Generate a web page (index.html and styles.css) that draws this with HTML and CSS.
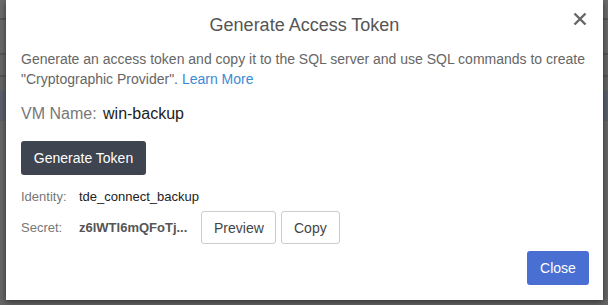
FILE: index.html
```html
<html>
    <head>
        <title>Generate Access Token</title>
        <meta charset="utf-8">
        <link rel="stylesheet" href="styles.css">
    </head>
    <body>
        <div class="modal">
            <div class="modal-header">
                <h4>Generate Access Token</h4>
                <svg class="close-x" width="14" height="14" viewBox="0 0 14 14">
                    <path d="M1.5 1.5 L12.5 12.5 M12.5 1.5 L1.5 12.5" stroke="#666" stroke-width="2.4" fill="none"/>
                </svg>
            </div>
            <div class="modal-body">
                <p class="intro">Generate an access token and copy it to the SQL server and use SQL commands to create "Cryptographic Provider". <a href="#">Learn More</a></p>
                <p class="vm-row"><span class="vm-label">VM Name:</span> <span class="vm-value">win-backup</span></p>
                <input type="button" class="btn dark" value="Generate Token">
                <div class="kv-row first">
                    <span class="kv-label">Identity:</span>
                    <span class="kv-value">tde_connect_backup</span>
                </div>
                <div class="kv-row">
                    <span class="kv-label">Secret:</span>
                    <span class="kv-value secret">z6lWTl6mQFoTj...</span>
                    <input type="button" class="btn light preview" value="Preview">
                    <input type="button" class="btn light" value="Copy">
                </div>
            </div>
            <div class="modal-footer">
                <input type="button" class="btn blue" value="Close">
            </div>
        </div>
    </body>
</html>
```

FILE: styles.css
```css
body {
    margin: 0;
    height: 305px;
    overflow: hidden;
    font-family: 'Liberation Sans', Arial, sans-serif;
    background: linear-gradient(#6b6b6b 0, #6b6b6b 18px, #555 18px, #555 20px, #686868 20px,
        #686868 53px, #555 53px, #555 55px, #666 55px, #666 75px, #555 75px, #555 77px,
        #646464 77px, #646464 91px, #5a5f6c 91px, #5a5f6c 121px, #666 121px);
}

.modal {
    margin: 0 5px 0 6px;
    height: 300px;
    background: #fff;
    box-shadow: 0 2px 6px rgba(0, 0, 0, 0.5);
    display: flex;
    flex-direction: column;
}

.modal-header {
    position: relative;
    height: 49px;
    display: flex;
    align-items: center;
    justify-content: center;
}

.modal-header h4 {
    margin: 2px 0 0;
    font-size: 18px;
    font-weight: normal;
    color: #555;
}

.close-x {
    position: absolute;
    right: 16px;
    top: 12px;
}

.modal-body {
    padding: 0 15px;
    flex: 1;
}

.intro {
    margin: 0;
    font-size: 14px;
    line-height: 20px;
    color: #666;
}

.intro a {
    color: #3a8ad6;
    text-decoration: none;
}

.vm-row {
    margin: 15px 0 17px;
    font-size: 16px;
    line-height: 20px;
}

.vm-label {
    color: #777;
}

.vm-value {
    color: #222;
    margin-left: 2px;
}

.btn {
    font-family: 'Liberation Sans', Arial, sans-serif;
    font-size: 14px;
    height: 34px;
    border-radius: 3px;
    cursor: pointer;
    padding: 0 12px;
}

.btn.dark {
    color: #fff;
    background: #3e4450;
    border: none;
    width: 125px;
}

.btn.light {
    color: #444;
    background: #fff;
    border: 1px solid #ccc;
    height: 33px;
}

.btn.light.preview {
    width: 75px;
    margin-right: 5px;
}

.btn.blue {
    color: #fff;
    background: #4a6fd3;
    border: none;
    width: 62px;
}

.kv-row {
    display: flex;
    align-items: center;
    margin-top: 7px;
    font-size: 13px;
}

.kv-row.first {
    margin-top: 14px;
}

.kv-label {
    color: #777;
    width: 58px;
}

.kv-value {
    color: #222;
}

.kv-value.secret {
    font-weight: bold;
    color: #555;
    width: 122px;
}

.modal-footer {
    display: flex;
    justify-content: flex-end;
    padding: 0 14px 15px;
}
```
